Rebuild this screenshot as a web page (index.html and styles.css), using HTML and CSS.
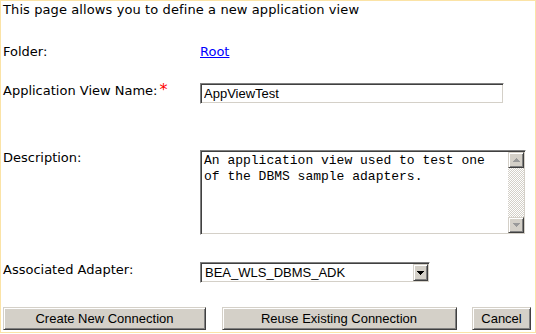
FILE: index.html
```html
<!DOCTYPE html>
<html>
<head>
<meta charset="utf-8">
<title>New Application View</title>
<link rel="stylesheet" href="styles.css">
</head>
<body>
<div class="page">
  <p class="intro">This page allows you to define a new application view</p>
  <div class="form">
    <div class="label">Folder:</div>
    <div class="field"><a href="#" class="link">Root</a></div>

    <div class="label">Application View Name:<span class="req">*</span></div>
    <div class="field"><input class="text-input inset" type="text" value="AppViewTest"></div>

    <div class="label">Description:</div>
    <div class="field">
      <div class="textarea-frame inset">
        <textarea class="textarea">An application view used to test one of the DBMS sample adapters.</textarea>
        <div class="scrollbar">
          <span class="sb-btn outset"><svg width="7" height="4" viewBox="0 0 7 4"><polygon points="0,4 3.5,0 7,4" fill="#9a9a9a"/></svg></span>
          <span class="sb-track"></span>
          <span class="sb-btn outset"><svg width="7" height="4" viewBox="0 0 7 4"><polygon points="0,0 7,0 3.5,4" fill="#9a9a9a"/></svg></span>
        </div>
      </div>
    </div>

    <div class="label">Associated Adapter:</div>
    <div class="field">
      <div class="select-frame inset">
        <select class="select"><option>BEA_WLS_DBMS_ADK</option></select>
        <span class="select-btn outset"><svg width="7" height="4" viewBox="0 0 7 4"><polygon points="0,0 7,0 3.5,4" fill="#000"/></svg></span>
      </div>
    </div>
  </div>
  <div class="actions">
    <button class="btn btn-create outset" type="button">Create New Connection</button>
    <button class="btn btn-reuse outset" type="button">Reuse Existing Connection</button>
    <button class="btn btn-cancel outset" type="button">Cancel</button>
  </div>
</div>
</body>
</html>
```
FILE: styles.css
```css
* { box-sizing: border-box; }
html, body { margin: 0; padding: 0; background: #fff; }
body {
  font-family: "DejaVu Sans", Verdana, sans-serif;
  font-size: 13px;
  color: #000;
}
.page {
  width: 536px;
  height: 333px;
  border: 1px solid #fbe3a6;
  padding: 1px 4px 0 2px;
}
.intro {
  margin: 0 0 26px;
  line-height: 16px;
  letter-spacing: 0.1px;
}
.form {
  display: grid;
  grid-template-columns: 197px 1fr;
  grid-template-rows: 39px 67px 112px 45px;
  align-items: start;
}
.label {
  line-height: 16px;
  white-space: nowrap;
}
.req {
  color: #f00;
  margin-left: 2px;
  font-size: 16px;
  line-height: 0;
}
.field { line-height: 16px; }
.link {
  color: #00f;
  text-decoration: underline;
}
.inset {
  border: 1px solid;
  border-color: #808080 #fff #fff #808080;
  box-shadow: inset 1px 1px 0 #404040, inset -1px -1px 0 #d4d0c8;
}
.outset {
  border: 1px solid;
  border-color: #d4d0c8 #404040 #404040 #d4d0c8;
  box-shadow: inset 1px 1px 0 #fff, inset -1px -1px 0 #808080;
  background: #d4d0c8;
}
.text-input {
  display: block;
  width: 304px;
  height: 21px;
  padding: 1px 3px;
  margin: 0;
  font: 13px/17px "Liberation Sans", Arial, sans-serif;
  color: #000;
  background: #fff;
  outline: none;
}
.textarea-frame {
  display: flex;
  width: 326px;
  height: 85px;
  padding: 1px;
  background: #fff;
}
.textarea {
  flex: 1;
  height: 100%;
  margin: 0;
  border: 0;
  padding: 1px 6px 0 2px;
  resize: none;
  overflow: hidden;
  font: 13px/16px "Liberation Mono", "Courier New", monospace;
  color: #000;
  background: transparent;
  outline: none;
}
.scrollbar {
  display: flex;
  flex-direction: column;
  width: 16px;
  flex: none;
}
.sb-btn {
  display: flex;
  align-items: center;
  justify-content: center;
  height: 16px;
  flex: none;
}
.sb-btn svg, .select-btn svg { display: block; shape-rendering: crispEdges; }
.sb-track {
  flex: 1;
  background: repeating-conic-gradient(#d4d0c8 0 25%, #fff 0 50%) 0 0 / 2px 2px;
}
.select-frame {
  display: flex;
  width: 230px;
  height: 21px;
  padding: 1px;
  background: #fff;
}
.select {
  flex: 1;
  -webkit-appearance: none;
  appearance: none;
  border: 0;
  margin: 0;
  padding: 0 0 0 3px;
  height: 17px;
  font: 13px/17px "Liberation Sans", Arial, sans-serif;
  color: #000;
  background: #fff;
  outline: none;
}
.select-btn {
  display: flex;
  align-items: center;
  justify-content: center;
  width: 15px;
  height: 17px;
  flex: none;
}
.actions {
  display: flex;
  justify-content: space-between;
}
.btn {
  height: 23px;
  padding: 0;
  margin: 0;
  font: 13px "Liberation Sans", Arial, sans-serif;
  color: #000;
  text-align: center;
}
.btn-create { width: 203px; }
.btn-reuse { width: 235px; }
.btn-cancel { width: 59px; }
```
